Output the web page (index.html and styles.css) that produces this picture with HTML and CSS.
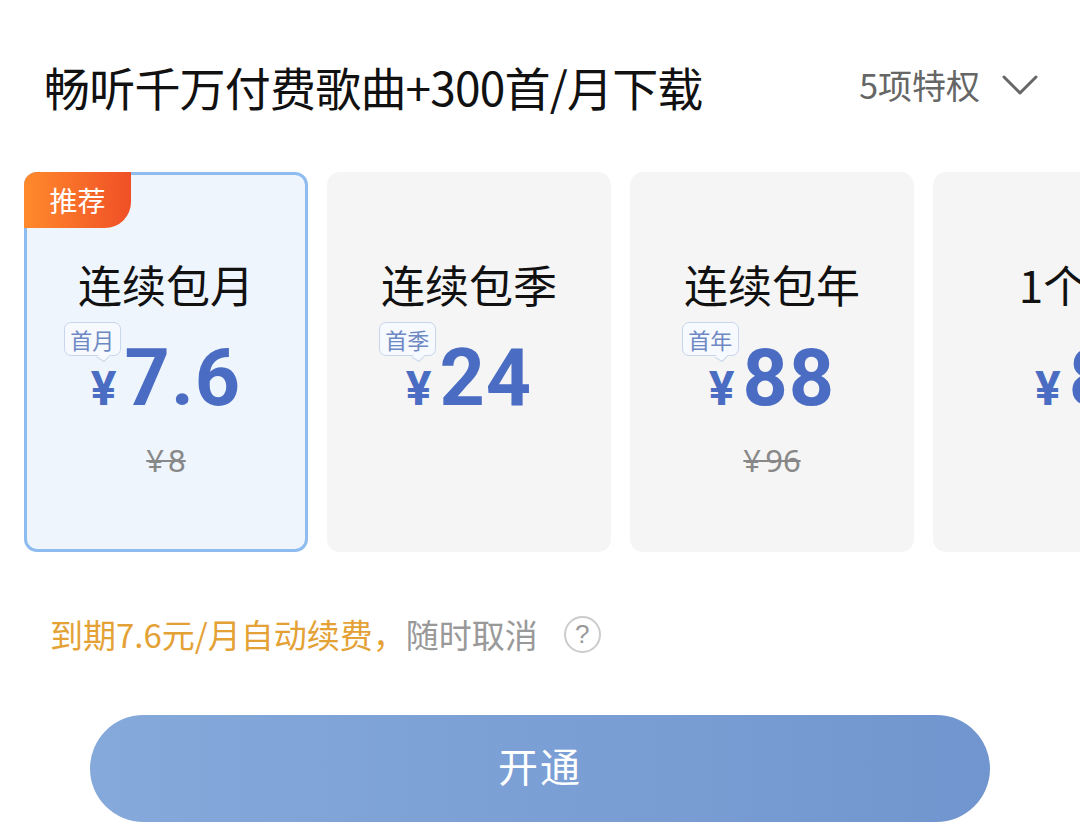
FILE: index.html
```html
<!DOCTYPE html>
<html lang="zh-CN">
<head>
<meta charset="utf-8">
<title>会员开通</title>
<link rel="stylesheet" href="styles.css">
</head>
<body>
<div class="page">
  <header class="head">
    <h1 class="head-title">畅听千万付费歌曲+300首/月下载</h1>
    <div class="perks">
      <span>5项特权</span>
      <svg class="chev" width="36" height="22" viewBox="0 0 36 22"><polyline points="2,3 18,19 34,3" fill="none" stroke="#666" stroke-width="3" stroke-linecap="round" stroke-linejoin="round"/></svg>
    </div>
  </header>

  <div class="cards">
    <div class="card selected">
      <div class="badge">推荐</div>
      <div class="card-title">连续包月</div>
      <div class="price"><span class="tag">首月</span><span class="yen">¥</span><span class="num">7.6</span></div>
      <div class="old">¥ 8</div>
    </div>
    <div class="card">
      <div class="card-title">连续包季</div>
      <div class="price"><span class="tag">首季</span><span class="yen">¥</span><span class="num">24</span></div>
    </div>
    <div class="card">
      <div class="card-title">连续包年</div>
      <div class="price"><span class="tag">首年</span><span class="yen">¥</span><span class="num">88</span></div>
      <div class="old">¥ 96</div>
    </div>
    <div class="card">
      <div class="card-title">1个月</div>
      <div class="price"><span class="yen">¥</span><span class="num">8</span></div>
    </div>
  </div>

  <div class="note">
    <span class="note-orange">到期7.6元/月自动续费，</span><span class="note-gray">随时取消</span>
    <span class="help">?</span>
  </div>

  <div class="btn-wrap">
    <button class="btn">开通</button>
  </div>
</div>
</body>
</html>
```

FILE: styles.css
```css
* { box-sizing: border-box; }
html, body { margin: 0; padding: 0; background: #fff; }
body {
  width: 1080px;
  height: 834px;
  overflow: hidden;
  font-family: "Noto Sans CJK SC", "Noto Sans", sans-serif;
  color: #111;
}
.page { display: flex; flex-direction: column; }

.head {
  display: flex;
  align-items: center;
  justify-content: space-between;
  height: 60px;
  margin-top: 56px;
  padding: 0 42px 0 44px;
}
.head-title {
  margin: 0;
  font-size: 46px;
  font-weight: 400;
  line-height: 60px;
  color: #111;
  letter-spacing: -0.8px;
}
.perks {
  display: flex;
  align-items: center;
  gap: 22px;
  font-size: 34px;
  color: #666;
  margin-top: -4px;
}
.chev { display: block; margin-top: 2px; }

.cards {
  display: flex;
  gap: 19px;
  margin-top: 56px;
  padding-left: 24px;
  overflow: hidden;
}
.card {
  position: relative;
  flex: 0 0 284px;
  height: 380px;
  border: 3px solid transparent;
  border-radius: 13px;
  background: #f5f5f5;
  display: flex;
  flex-direction: column;
  align-items: center;
  padding-top: 83px;
}
.card.selected {
  background: #eef5fd;
  border-color: #8fbcef;
}
.badge {
  position: absolute;
  top: -3px;
  left: -3px;
  width: 107px;
  height: 56px;
  border-radius: 13px 0 26px 0;
  background: linear-gradient(90deg, #ff8a2c, #f04f26);
  color: #fff;
  font-size: 28px;
  line-height: 56px;
  text-align: center;
}
.card-title {
  font-size: 44px;
  line-height: 52px;
  color: #111;
}
.price {
  position: relative;
  display: flex;
  align-items: baseline;
  margin-top: 28px;
  height: 80px;
  line-height: 80px;
  color: #4a6dc3;
  font-family: "Roboto", "Noto Sans", sans-serif;
  font-weight: 700;
}
.yen {
  font-size: 48px;
  margin-right: 8px;
}
.num {
  font-size: 79px;
  letter-spacing: 1px;
}
.tag {
  position: absolute;
  left: -27px;
  top: -16px;
  width: 57px;
  height: 34px;
  border: 1px solid #c9d5ea;
  border-radius: 7px;
  background: #f6f9fe;
  color: #6d88c3;
  font-family: "Noto Sans CJK SC", sans-serif;
  font-weight: 400;
  font-size: 22px;
  line-height: 32px;
  text-align: center;
}
.tag::after {
  content: "";
  position: absolute;
  right: 12px;
  bottom: -6px;
  width: 8px;
  height: 8px;
  background: #f6f9fe;
  border-right: 1px solid #c9d5ea;
  border-bottom: 1px solid #c9d5ea;
  transform: rotate(30deg) skewX(-15deg);
}
.old {
  margin-top: 24px;
  font-family: "Noto Sans", sans-serif;
  font-size: 31px;
  line-height: 36px;
  color: #888;
  text-decoration: line-through;
  text-decoration-thickness: 2px;
  word-spacing: -4px;
}

.note {
  display: flex;
  align-items: center;
  margin-top: 62px;
  padding-left: 50px;
  height: 40px;
  font-size: 33px;
  line-height: 40px;
}
.note-orange { color: #e4a236; }
.note-gray { color: #999; }
.help {
  margin-left: 26px;
  width: 37px;
  height: 37px;
  border: 2px solid #ccc;
  border-radius: 50%;
  color: #999;
  font-family: "Liberation Sans", sans-serif;
  font-size: 26px;
  line-height: 33px;
  text-align: center;
}

.btn-wrap {
  display: flex;
  justify-content: center;
  margin-top: 61px;
}
.btn {
  width: 900px;
  height: 107px;
  border: none;
  border-radius: 54px;
  background: linear-gradient(90deg, #85a9da, #7196cf);
  color: #fff;
  font-family: "Noto Sans CJK SC", sans-serif;
  font-size: 40px;
  letter-spacing: 2px;
  padding: 0 0 8px 0;
}
```
